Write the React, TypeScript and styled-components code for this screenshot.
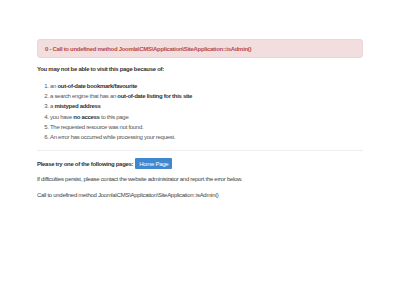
import styled, { createGlobalStyle } from 'styled-components'

const GlobalStyle = createGlobalStyle`
  html, body {
    margin: 0;
    padding: 0;
    background: #ffffff;
  }
  body {
    font-family: 'Liberation Sans', Arial, sans-serif;
    font-size: 6px;
    letter-spacing: -0.3px;
    line-height: 10px;
    color: #333333;
  }
`

const reasons = [
  { pre: 'an ', strong: 'out-of-date bookmark/favourite', post: '' },
  { pre: 'a search engine that has an ', strong: 'out-of-date listing for this site', post: '' },
  { pre: 'a ', strong: 'mistyped address', post: '' },
  { pre: 'you have ', strong: 'no access', post: ' to this page' },
  { pre: 'The requested resource was not found.', strong: '', post: '' },
  { pre: 'An error has occurred while processing your request.', strong: '', post: '' },
]

const App = () => {
  return (
    <>
      <GlobalStyle />
      <Page>
        <Alert>0 - Call to undefined method Joomla\CMS\Application\SiteApplication::isAdmin()</Alert>
        <Heading>You may not be able to visit this page because of:</Heading>
        <Reasons>
          {reasons.map((r, i) => (
            <Reason key={i}>
              {r.pre}
              {r.strong && <Strong>{r.strong}</Strong>}
              {r.post}
            </Reason>
          ))}
        </Reasons>
        <Divider />
        <TryRow>
          <Strong>Please try one of the following pages:</Strong>
          <HomeButton>Home Page</HomeButton>
        </TryRow>
        <Paragraph mt="5px">
          If difficulties persist, please contact the website administrator and report the error below.
        </Paragraph>
        <Paragraph mt="6px">Call to undefined method Joomla\CMS\Application\SiteApplication::isAdmin()</Paragraph>
      </Page>
    </>
  )
}

export default App

const Page = styled.div`
  width: 326px;
  margin: 0 auto;
  padding-top: 39px;
  display: flex;
  flex-direction: column;
`
const Alert = styled.div`
  display: flex;
  align-items: center;
  box-sizing: border-box;
  height: 19px;
  padding: 0 7px;
  background: #f2dede;
  border: 1px solid #eed3d7;
  border-radius: 3px;
  color: #b94a48;
  font-weight: bold;
`
const Heading = styled.div`
  margin-top: 6px;
  font-weight: bold;
`
const Reasons = styled.ol`
  margin: 7px 0 0;
  padding-left: 13px;
`
const Reason = styled.li`
  line-height: 10.2px;
  color: #555555;
`
const Strong = styled.strong`
  font-weight: bold;
  color: #333333;
`
const Divider = styled.hr`
  margin: 8px 0 0;
  border: none;
  border-top: 1px solid #eeeeee;
  height: 0;
`
const TryRow = styled.div`
  display: flex;
  align-items: center;
  gap: 2px;
  margin-top: 7px;
`
const HomeButton = styled.span`
  display: flex;
  align-items: center;
  height: 11px;
  padding: 0 4px;
  background: #3f88cf;
  border-radius: 1px;
  color: #ffffff;
`
const Paragraph = styled.div<{ mt: string }>`
  margin-top: ${(p) => p.mt};
  color: #444444;
`
